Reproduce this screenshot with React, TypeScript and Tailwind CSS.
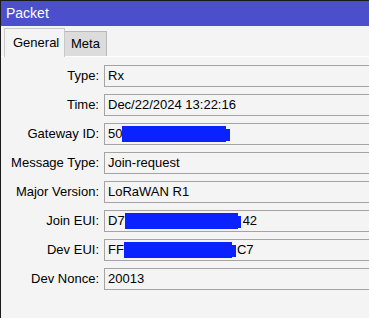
import React from 'react';

type Row = { label: string; value: React.ReactNode };

// blue redaction scribble: a main block plus a shorter ledge on the right
const Redact: React.FC<{ w: number; tail?: number }> = ({ w, tail = 0 }) => (
    <span className="inline-flex items-center h-[16px] align-middle">
        <span className="block h-[16px] bg-[#0a22ff]" style={{ width: w }} />
        {tail > 0 && <span className="block h-[12px] mt-[2px] bg-[#0a22ff]" style={{ width: tail }} />}
    </span>
);

const rows: Row[] = [
    { label: 'Type:', value: 'Rx' },
    { label: 'Time:', value: 'Dec/22/2024 13:22:16' },
    { label: 'Gateway ID:', value: <>50<Redact w={104} tail={4} /></> },
    { label: 'Message Type:', value: 'Join-request' },
    { label: 'Major Version:', value: 'LoRaWAN R1' },
    { label: 'Join EUI:', value: <>D7<Redact w={113} tail={3} /><span className="ml-[2px]">42</span></> },
    { label: 'Dev EUI:', value: <>FF<Redact w={108} tail={4} /><span className="ml-[1px]">C7</span></> },
    { label: 'Dev Nonce:', value: '20013' },
];

const App: React.FC = () => {
    return (
        <div
            className="w-[369px] h-[318px] overflow-hidden bg-[#f4f4f4] border-t border-l border-[#1a1a1a] text-[13px] text-black"
            style={{ fontFamily: '"Liberation Sans", Arial, sans-serif' }}
        >
            {/* title bar */}
            <div className="h-[25px] bg-[#4b4fcc] text-white text-[14px] flex items-center pl-[5px]">Packet</div>

            {/* tabs */}
            <div className="h-[31px] flex items-end pl-[3px] border-b border-white">
                <div className="h-[29px] w-[61px] -mb-px bg-[#f4f4f4] border border-b-0 border-[#c8c8c8] flex items-center pl-[8px]">
                    General
                </div>
                <div className="h-[25px] w-[42px] bg-[#dcdcdc] border border-l-0 border-b-0 border-[#b8b8b8] flex items-center pl-[6px]">
                    Meta
                </div>
            </div>

            {/* fields */}
            <div className="pt-[8px] flex flex-col gap-[7px]">
                {rows.map((r) => (
                    <div key={r.label} className="flex items-center">
                        <div className="w-[98px] shrink-0 text-right">{r.label}</div>
                        <div className="ml-[5px] h-[22px] w-[300px] shrink-0 border border-[#a4a4a4] flex items-center pl-[3px] whitespace-nowrap">
                            {r.value}
                        </div>
                    </div>
                ))}
            </div>
        </div>
    );
};

export default App;
